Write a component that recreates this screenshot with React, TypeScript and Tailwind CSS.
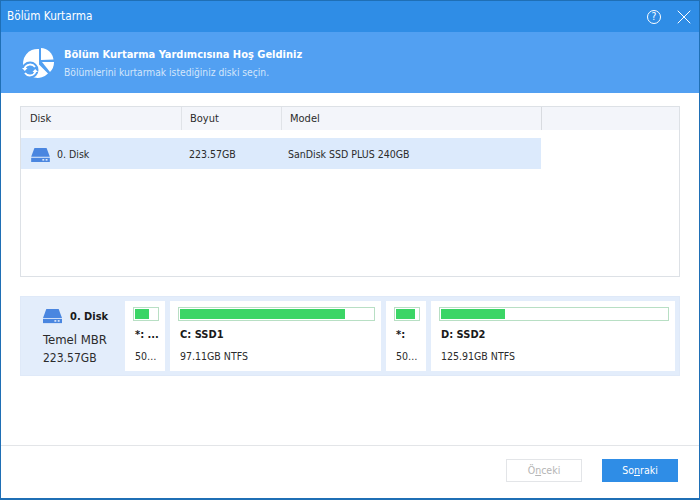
import { X } from "lucide-react";

function DiskIcon({ className }: { className: string }) {
  return (
    <svg viewBox="0 0 20 15" className={className}>
      <path d="M3.5 0H16.5L20 9.5H0Z" fill="#4a86e0" />
      <path d="M0 10.5H20V15H0Z" fill="#4a86e0" />
      <rect x="12" y="12" width="2" height="1.4" fill="#fff" />
      <rect x="15.5" y="12" width="2" height="1.4" fill="#fff" />
    </svg>
  );
}

function HeaderIcon() {
  return (
    <svg viewBox="0 0 32 32" className="h-[32px] w-[32px]">
      <path d="M17 2V17.5L26 26.5A14.5 14.5 0 1 1 17 2Z" fill="#fff" />
      <path d="M19 1A13 13 0 0 1 31.5 12.5L19 13Z" fill="#fff" />
      <path d="M20 15H32A14 14 0 0 1 28 25Z" fill="#fff" />
      <circle cx="8" cy="23" r="8.5" fill="#52a0f2" />
      <path d="M2.5 21.5A6 6 0 0 1 13 20" fill="none" stroke="#fff" strokeWidth="1.8" />
      <path d="M13.5 24.5A6 6 0 0 1 3 26" fill="none" stroke="#fff" strokeWidth="1.8" />
      <path d="M0 21H5.5L2.8 24Z" fill="#fff" />
      <path d="M10.5 25H16L13.2 22Z" fill="#fff" />
    </svg>
  );
}

function Partition(props: { width: string; name: string; size: string; fill: string }) {
  return (
    <div className={`${props.width} flex h-[70px] shrink-0 flex-col bg-white pt-[6px] pr-[6px] pl-2`}>
      <div className="h-[14px] border border-[#b8dfc4] p-px">
        <div className={`${props.fill} h-full bg-[#3bd566]`} />
      </div>
      <div className="mt-[5px] h-[18px] pl-[2px] text-[11px] leading-[18px] font-bold whitespace-nowrap text-[#1a1a1a]">
        {props.name}
      </div>
      <div className="mt-[3px] h-[18px] pl-[2px] text-[10.5px] leading-[18px] whitespace-nowrap">
        {props.size}
      </div>
    </div>
  );
}

export default function App() {
  return (
    <div
      className="flex h-[500px] w-[700px] flex-col overflow-hidden border-x border-b-2 border-x-[#1f6fb5] border-b-[#1f6fb5] bg-white text-[#2b2b2b]"
      style={{ fontFamily: '"DejaVu Sans Condensed", "Liberation Sans", sans-serif' }}
    >
      <div className="flex h-[32px] shrink-0 items-center justify-between border-t border-[#1f6fb5] bg-[#2f8de6] pr-[3px] pl-[6px] text-white">
        <span className="text-[11.7px]">Bölüm Kurtarma</span>
        <div className="flex items-center gap-[11px]">
          <div className="flex h-[14px] w-[14px] items-center justify-center rounded-full border border-white text-[10px] leading-none">?</div>
          <X className="h-[24px] w-[24px]" strokeWidth={1} />
        </div>
      </div>

      <div className="flex h-[61px] shrink-0 items-center bg-[#52a0f2] pl-[21px] text-white">
        <HeaderIcon />
        <div className="ml-[10px] pt-[2px]">
          <div className="text-[11px] leading-[17px] font-bold">Bölüm Kurtarma Yardımcısına Hoş Geldiniz</div>
          <div className="mt-[1px] text-[10.2px] leading-[17px] text-[#d3e6fb]">Bölümlerini kurtarmak istediğiniz diski seçin.</div>
        </div>
      </div>

      <div className="mx-[19px] mt-[13px] h-[171px] shrink-0 border border-[#dde1e6]">
        <div className="flex h-[23px] bg-[#f3f5fa] text-[11px] leading-[23px]">
          <div className="w-[160px] pl-[9px]">Disk</div>
          <div className="w-[100px] border-l border-[#e0e3e8] pl-[8px]">Boyut</div>
          <div className="w-[260px] border-l border-[#e0e3e8] pl-[8px]">Model</div>
          <div className="flex-1 border-l border-[#d8dbe0]" />
        </div>
        <div className="mt-[8px] flex h-[31px] w-[520px] items-center bg-[#dceafc] pt-[3px] text-[10.5px]">
          <div className="flex w-[168px] items-center pl-[10px]">
            <DiskIcon className="h-[14px] w-[19px]" />
            <span className="ml-[7px]">0. Disk</span>
          </div>
          <div className="w-[99px]">223.57GB</div>
          <div>SanDisk SSD PLUS 240GB</div>
        </div>
      </div>

      <div className="mx-[19px] mt-[19px] flex h-[80px] shrink-0 items-center gap-[5px] border border-[#dfe9f8] bg-[#e3edfb] pr-[4px]">
        <div className="w-[99px] shrink-0 self-start pt-[11px] pl-[22px]">
          <div className="flex h-[16px] items-end">
            <DiskIcon className="h-[16px] w-[19px]" />
            <span className="ml-[8px] text-[11px] leading-[15px] font-bold text-[#1a1a1a]">0. Disk</span>
          </div>
          <div className="mt-[6px] text-[13px] leading-[19px]">Temel MBR</div>
          <div className="text-[12px] leading-[19px]">223.57GB</div>
        </div>
        <Partition width="w-[40px]" name="*: ..." size="50…" fill="w-[14px]" />
        <Partition width="w-[211px]" name="C: SSD1" size="97.11GB NTFS" fill="w-[165px]" />
        <Partition width="w-[40px]" name="*:" size="50…" fill="w-[19px]" />
        <Partition width="w-[244px]" name="D: SSD2" size="125.91GB NTFS" fill="w-[64px]" />
      </div>

      <div className="mt-[69px] flex flex-1 items-start justify-end gap-[20px] border-t border-[#e3e5e8] pt-[13px] pr-[21px] text-[10.5px]">
        <button className="h-[23px] w-[76px] border border-[#e3e5e8] text-[#b5b5b5]">
          Ö<span className="underline">n</span>ceki
        </button>
        <button className="h-[23px] w-[76px] bg-[#2f8de6] text-white">
          So<span className="underline">n</span>raki
        </button>
      </div>
    </div>
  );
}
